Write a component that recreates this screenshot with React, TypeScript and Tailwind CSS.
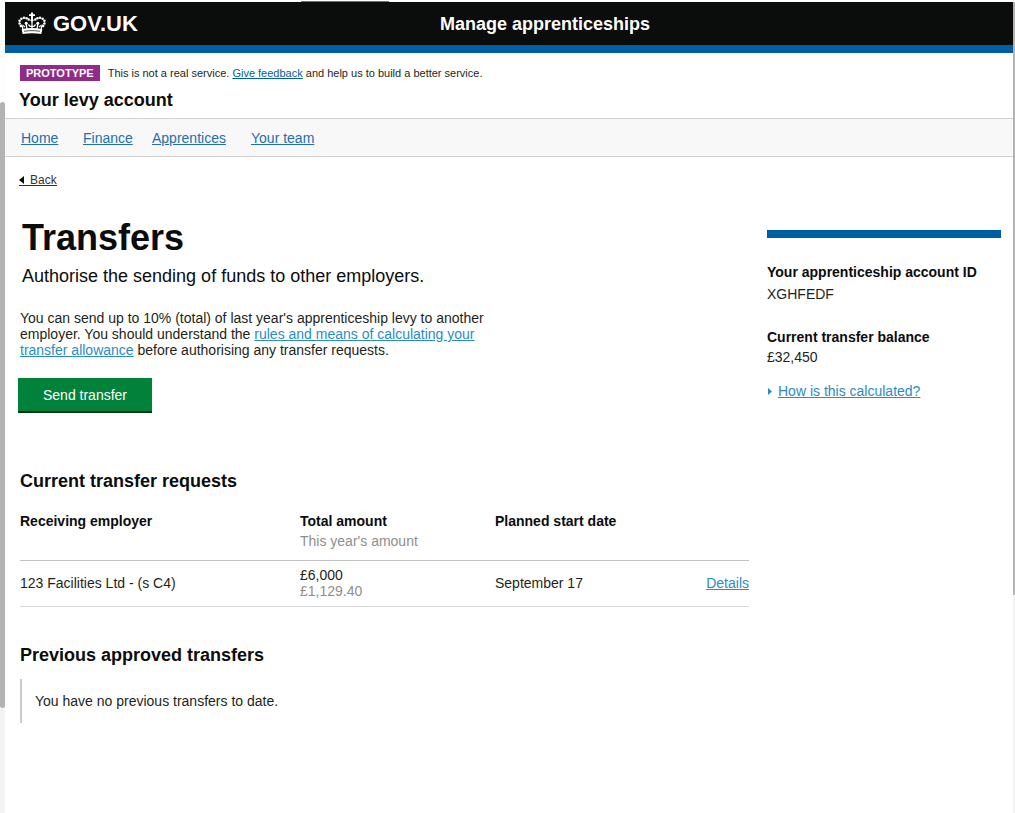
import React from "react";

const beads = [
  [2.8, 14], [1.6, 11.5], [1.6, 8.8], [3.4, 6.7], [6, 5.8], [8.6, 6.3], [10.7, 7.6],
  [25.2, 14], [26.4, 11.5], [26.4, 8.8], [24.6, 6.7], [22, 5.8], [19.4, 6.3], [17.3, 7.6],
];

const jewels = [
  [8.2, 11.2], [19.8, 11.2], [14, 8.2],
];

function Crown() {
  return (
    <svg viewBox="0 0 28 23" className="h-[23px] w-7 shrink-0" fill="#fff" aria-hidden="true">
      {beads.map(([x, y], i) => (
        <circle key={i} cx={x} cy={y} r="1.25" />
      ))}
      {jewels.map(([x, y], i) => (
        <circle key={i} cx={x} cy={y} r="1.5" />
      ))}
      <path d="M13 0.500h2v1.700h2v1.800h-2v3h-2V4h-2V2.200h2z" />
      <path d="M3.700 12.500l1.500 5.800M24.300 12.500l-1.500 5.800M8.200 11.500l.8 6M19.800 11.500l-.8 6M14 9v8" stroke="#fff" strokeWidth="1.3" fill="none" />
      <path d="M5 13.500l2 1.500M23 13.500l-2 1.500M10.500 12.500l1.500 1.800h4l1.500-1.800" stroke="#fff" strokeWidth="1.300" fill="none" />
      <path d="M3.600 17.300c3.300-.8 6.800-1.200 10.400-1.200s7.100.4 10.400 1.200L23.300 22c-2.900-.5-6-.8-9.300-.8s-6.400.3-9.300.8z" />
      <path d="M6 19.300c5.300-.9 10.700-.9 16 0" stroke="#0b0c0c" strokeWidth="0.700" fill="none" />
    </svg>
  );
}

const linkClass = "text-[#2b8cc4] underline";

export default function App() {
  return (
    <div className="flex min-h-screen bg-white font-['Liberation_Sans',Arial,sans-serif] text-sm text-[#1d1f20]">
      <div className="flex w-[5px] shrink-0 flex-col" aria-hidden="true">
        <div className="grow-[102] bg-[#fdfdfd]" />
        <div className="grow-[606] rounded-b-sm rounded-t-sm bg-[#b3b3b3]" />
        <div className="grow-[105] bg-[#f3f3f3]" />
      </div>

      <div className="min-w-0 grow">
        <div className="flex h-0.5 items-end pl-[296px]" aria-hidden="true">
          <div className="h-px w-[88px] bg-[#2d7ce8]" />
        </div>
        <header className="grid h-[51px] grid-cols-[435fr_573fr] items-center border-b-8 border-[#005ea5] bg-[#0b0c0c] text-white">
          <a href="#" className="flex items-center gap-[7px] pl-[13px] text-[22px] leading-6 font-bold">
            <Crown />
            GOV.UK
          </a>
          <span className="text-lg font-bold">Manage apprenticeships</span>
        </header>

        <div className="flex h-[65px] flex-col gap-2 px-[14px] pt-3">
          <p className="flex items-center gap-2 pl-px text-[11px] leading-4">
            <strong className="bg-[#912b88] px-[6px] text-white">PROTOTYPE</strong>
            <span>
              This is not a real service.{" "}
              <a href="#" className="text-[#005ea5] underline">Give feedback</a> and help us to build a better service.
            </span>
          </p>
          <p className="text-lg leading-[22px] font-bold text-[#0b0c0c]">Your levy account</p>
        </div>

        <nav className="grid h-[39px] grid-cols-[62px_69px_99px_auto] items-center border-y border-[#d0d0d0] bg-[#f8f8f8] pl-4 text-[#1f6fb2]">
          <a href="#" className="underline">Home</a>
          <a href="#" className="underline">Finance</a>
          <a href="#" className="underline">Apprentices</a>
          <a href="#" className="underline">Your team</a>
        </nav>

        <main className="pt-[17px] pr-3 pb-10 pl-[13px]">
          <a href="#" className="ml-px flex h-3 w-fit items-center gap-[6px] border-b border-[#333] text-xs leading-3 text-[#333]">
            <svg viewBox="0 0 5 8" className="h-2 w-[5px]" fill="#0b0c0c" aria-hidden="true">
              <path d="M5 0v8L0 4z" />
            </svg>
            Back
          </a>

          <div className="flex justify-between gap-4">
            <div className="w-[731px] pt-[30px]">
              <h1 className="pl-1 text-4xl leading-[44px] font-bold text-[#0b0c0c]">Transfers</h1>
              <p className="pt-1 pl-1 text-lg leading-6 text-[#0b0c0c]">
                Authorise the sending of funds to other employers.
              </p>
              <p className="max-w-[490px] pt-[22px] pl-0.5 leading-4">
                You can send up to 10% (total) of last year's apprenticeship levy to another employer. You should
                understand the{" "}
                <a href="#" className={linkClass}>rules and means of calculating your transfer allowance</a> before
                authorising any transfer requests.
              </p>
              <button
                type="button"
                className="mt-5 h-[35px] w-[134px] border-b-2 border-[#003618] bg-[#00823b] text-white"
              >
                Send transfer
              </button>

              <section className="pt-14 pl-0.5">
                <h2 className="text-lg leading-6 font-bold text-[#0b0c0c]">Current transfer requests</h2>
                <table className="mt-[18px] w-full table-fixed text-left">
                  <colgroup>
                    <col className="w-[280px]" />
                    <col className="w-[195px]" />
                    <col />
                    <col className="w-[60px]" />
                  </colgroup>
                  <thead>
                    <tr className="h-[49px] border-b border-[#bfc1c3] align-top leading-5 text-[#0b0c0c]">
                      <th scope="col" className="font-bold">Receiving employer</th>
                      <th scope="col" className="font-bold">
                        Total amount
                        <span className="block font-normal text-[#8e8e8e]">This year's amount</span>
                      </th>
                      <th scope="col" className="font-bold">Planned start date</th>
                      <td />
                    </tr>
                  </thead>
                  <tbody>
                    <tr className="h-[46px] border-b border-[#d5d6d7] leading-4">
                      <td>123 Facilities Ltd - (s C4)</td>
                      <td>
                        £6,000
                        <span className="block text-[#8e8e8e]">£1,129.40</span>
                      </td>
                      <td>September 17</td>
                      <td className="text-right">
                        <a href="#" className={linkClass}>Details</a>
                      </td>
                    </tr>
                  </tbody>
                </table>
              </section>

              <section className="pt-9 pl-0.5">
                <h2 className="text-lg leading-6 font-bold text-[#0b0c0c]">Previous approved transfers</h2>
                <p className="mt-3 border-l-2 border-[#c8cacb] py-3 pl-[13px] leading-5">
                  You have no previous transfers to date.
                </p>
              </section>
            </div>

            <aside className="mt-11 w-[234px] shrink-0">
              <div className="h-2 bg-[#005ea5]" />
              <dl className="pt-6 leading-5">
                <dt className="font-bold text-[#0b0c0c]">Your apprenticeship account ID</dt>
                <dd className="pt-0.5">XGHFEDF</dd>
                <dt className="pt-[23px] font-bold text-[#0b0c0c]">Current transfer balance</dt>
                <dd>£32,450</dd>
              </dl>
              <a href="#" className="mt-[14px] flex items-center gap-[6px] pl-px leading-5 text-[#2b8cc4]">
                <svg viewBox="0 0 4 7" className="h-[7px] w-1" fill="currentColor" aria-hidden="true">
                  <path d="M0 0l4 3.500L0 7z" />
                </svg>
                <span className="underline">How is this calculated?</span>
              </a>
            </aside>
          </div>
        </main>
      </div>

      <div className="flex w-0.5 shrink-0 flex-col pt-0.5" aria-hidden="true">
        <div className="grow-[593] bg-[#b3b3b3]" />
        <div className="grow-[218] bg-[#f3f3f3]" />
      </div>
    </div>
  );
}
